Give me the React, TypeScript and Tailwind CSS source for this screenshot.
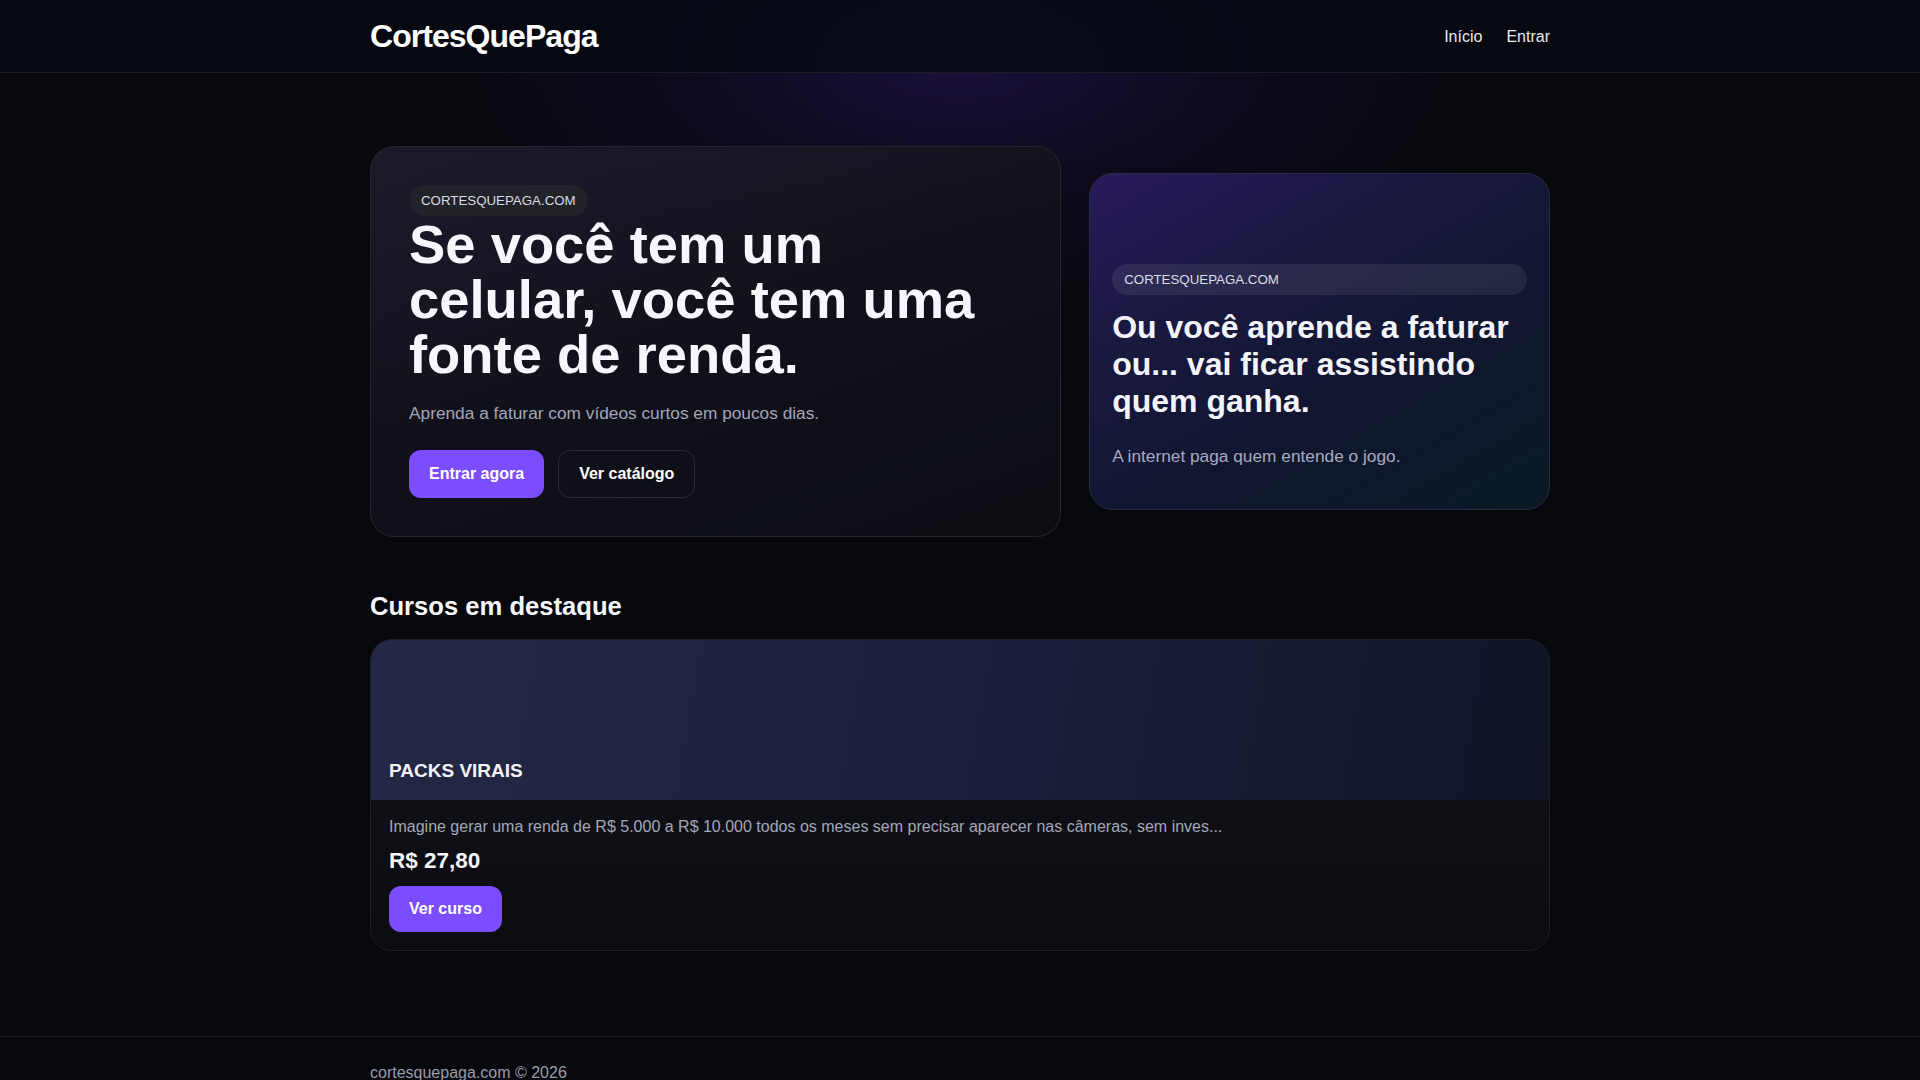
export default function App() {
  return (
    <div
      className="relative min-h-screen overflow-hidden bg-[#07080c] text-white"
      style={{ fontFamily: '"Liberation Sans", Arial, sans-serif' }}
    >
      {/* purple glow behind the top of the page */}
      <div className="pointer-events-none absolute left-1/2 top-0 h-[520px] w-[1100px] -translate-x-1/2 -translate-y-[200px] bg-[radial-gradient(ellipse_at_center,rgba(60,30,140,0.38)_0%,rgba(40,20,100,0.18)_35%,rgba(7,8,12,0)_70%)]" />

      <header className="relative border-b border-[#1c1d24] bg-[#060912]/85">
        <div className="mx-auto flex h-[72px] max-w-[1180px] items-center justify-between">
          <a className="text-[32px] font-bold tracking-[-0.03em] text-white">CortesQuePaga</a>
          <nav className="flex items-center gap-6 pt-[2px] text-[16px] text-[#e6e7ee]">
            <a>Início</a>
            <a>Entrar</a>
          </nav>
        </div>
      </header>

      <main className="relative mx-auto max-w-[1180px] pb-[85px] pt-[73px]">
        <section className="grid grid-cols-[1.5fr_1fr] items-center gap-7">
          <div className="rounded-[24px] border border-[#25252f] bg-[linear-gradient(160deg,rgba(30,28,44,0.95)_0%,rgba(17,17,26,0.95)_50%,rgba(12,14,20,0.98)_100%)] p-[38px]">
            <span className="inline-block rounded-full bg-[#222329] px-3 py-2 text-[13.3px] leading-[15px] text-[#d9dae2]">
              CORTESQUEPAGA.COM
            </span>
            <h1 className="mt-px max-w-[590px] text-[54.4px] font-bold leading-[55px] text-[#f6f7fc]">
              Se você tem um celular, você tem uma fonte de renda.
            </h1>
            <p className="mt-[19px] text-[17.3px] leading-[25px] text-[#a3a5b8]">
              Aprenda a faturar com vídeos curtos em poucos dias.
            </p>
            <div className="mt-6 flex gap-[14px]">
              <button className="rounded-xl bg-[#7c4dff] px-5 py-[14px] text-[16px] font-bold leading-5 text-white">
                Entrar agora
              </button>
              <button className="rounded-xl border border-[#2a2b33] bg-transparent px-5 py-[13px] text-[16px] font-bold leading-5 text-white">
                Ver catálogo
              </button>
            </div>
          </div>

          <div className="flex flex-col rounded-[24px] border border-[#282b45] bg-[linear-gradient(150deg,#2a1a5c_0%,#1a1840_30%,#111630_60%,#0a1a24_100%)] px-[22px] pb-[40px] pt-[90px]">
            <span className="block rounded-full bg-white/[0.08] px-3 py-2 text-[13.3px] leading-[15px] text-[#dcdde6]">
              CORTESQUEPAGA.COM
            </span>
            <h2 className="mt-[14px] text-[32px] font-bold leading-[36.8px] text-[#f3f4fa]">
              Ou você aprende a faturar ou... vai ficar assistindo quem ganha.
            </h2>
            <p className="mt-6 text-[17.3px] leading-[25px] text-[#a7a9c0]">A internet paga quem entende o jogo.</p>
          </div>
        </section>

        <section className="mt-[54px]">
          <h2 className="mb-[17px] text-[25.6px] font-bold leading-[31px] text-[#f5f6fb]">Cursos em destaque</h2>
          <div className="overflow-hidden rounded-[22px] border border-[#1f2029] bg-[#0c0d12]">
            <div className="flex h-[160px] items-end bg-[linear-gradient(100deg,#232845_0%,#1c2140_45%,#141a30_75%,#101426_100%)] px-[18px] pb-[18px]">
              <h3 className="text-[19px] font-bold leading-[23px] text-[#f3f4fa]">PACKS VIRAIS</h3>
            </div>
            <div className="flex flex-col items-start gap-[10px] bg-[linear-gradient(180deg,#0f1015_0%,#0b0c11_100%)] px-[18px] pb-[18px] pt-4">
              <p className="text-[16px] leading-[22px] text-[#a4a7b8]">
                Imagine gerar uma renda de R$ 5.000 a R$ 10.000 todos os meses sem precisar aparecer nas câmeras, sem inves...
              </p>
              <p className="text-[22.5px] font-bold leading-[26px] text-[#f5f6fb]">R$ 27,80</p>
              <button className="mt-[2px] rounded-xl bg-[#7c4dff] px-5 py-[13px] text-[16px] font-bold leading-5 text-white">
                Ver curso
              </button>
            </div>
          </div>
        </section>
      </main>

      <footer className="relative border-t border-[#1c1d24]">
        <div className="mx-auto max-w-[1180px] py-6 text-[16px] leading-6 text-[#9a9cae]">cortesquepaga.com © 2026</div>
      </footer>
    </div>
  );
}
